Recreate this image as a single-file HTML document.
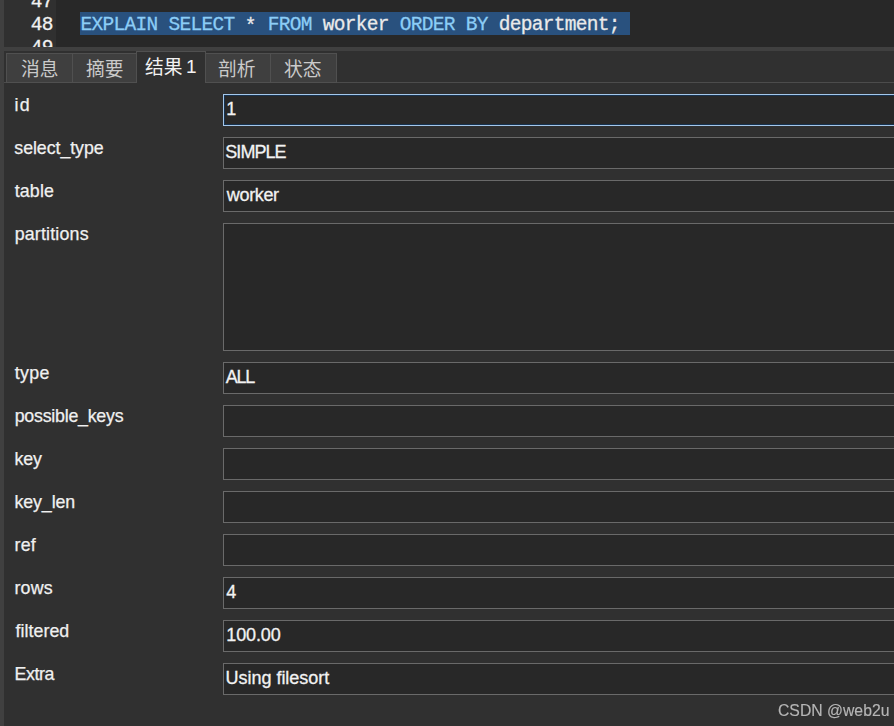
<!DOCTYPE html><html lang="zh"><head><meta charset="utf-8"><title>EXPLAIN result</title><style>
*{box-sizing:border-box;margin:0;padding:0}
html,body{width:894px;height:726px;overflow:hidden;background:#303030;font-family:"Liberation Sans",sans-serif}
body{position:relative;font-family:"Liberation Sans",sans-serif}
div,span,svg{position:absolute}
.strip{left:0;top:0;width:4px;height:726px;background:#404040}
.editor{left:4px;top:0;width:890px;height:47px;background:#282828;overflow:hidden}
.gutter{left:0;top:0;width:52px;height:47px;background:#303030}
.ln{left:0;width:48.8px;-webkit-text-stroke:0.28px #f2f2f2;height:23px;line-height:23px;text-align:right;font-family:"Liberation Mono",monospace;font-size:19.5px;letter-spacing:-0.7px;color:#f2f2f2;white-space:pre}
.sel{left:76px;top:12px;width:550px;height:23px;background:#29517e}
.code{-webkit-text-stroke:0.28px;left:76.6px;top:14px;height:23px;line-height:23px;font-family:"Liberation Mono",monospace;font-size:19.5px;letter-spacing:-0.7px;color:#eaeaea;white-space:pre}
.code span{position:static}
.k{color:#8ccdf6}
.code .as{position:relative;top:1.7px;left:-1px}
.band{left:4px;top:47px;width:890px;height:4px;background:#404040}
.hl{top:82px;height:1px;background:#4c4c4c}
.tab{top:53px;height:30px;background:#3f3f3f;border:1px solid #505050}
.tab.act{top:51px;height:32px;background:#303030;border-bottom:none}
.lab{-webkit-text-stroke:0.25px;left:15px;height:20px;line-height:20px;font-size:17.8px;color:#f0f0f0;white-space:pre}
.in{left:223px;width:700px;background:#282828;border:1px solid #6a6a6a}
.in.f{border-color:#a4c7ea;box-shadow:inset 0 0 0 1px #17324f}
.v{-webkit-text-stroke:0.3px;left:2px;top:-1px;height:30px;line-height:30px;font-size:18px;color:#f2f2f2;white-space:pre}
.one{left:186px;top:56px;height:22px;line-height:22px;font-size:19px;color:#f2f2f2;white-space:pre}
.wm{right:4.3px;top:701px;height:20px;line-height:20px;font-size:15.75px;color:#bcbcbc;white-space:pre;opacity:.96;will-change:transform;-webkit-text-stroke:.15px #bcbcbc}
.cj text{font-family:"Liberation Sans","Noto Sans CJK SC",sans-serif}
</style></head><body>
<div class="strip"></div>
<div class="editor"><div class="gutter"></div>
<div class="ln" style="top:-9px">47</div>
<div class="ln" style="top:14px">48</div>
<div class="ln" style="top:37px">49</div>
<div class="sel"></div>
<div class="code"><span class="k">EXPLAIN SELECT</span> <span class="as">*</span> <span class="k">FROM</span> worker <span class="k">ORDER BY</span> department;</div>
</div>
<div class="band"></div>
<div class="hl" style="left:4px;width:132px"></div>
<div class="hl" style="left:206px;width:688px"></div>
<div class="tab" style="left:6px;width:67px"></div>
<div class="tab" style="left:72px;width:65px"></div>
<div class="tab act" style="left:136px;width:70px"></div>
<div class="tab" style="left:205px;width:66px"></div>
<div class="tab" style="left:270px;width:67px"></div>
<svg class="cj" style="left:20.5px;top:58.9px" width="37.60" height="22.56" viewBox="0 0 2000 1200" fill="#cacaca"><text x="0" y="880" font-size="1000">消息</text></svg>
<svg class="cj" style="left:86.4px;top:58.9px" width="37.60" height="22.56" viewBox="0 0 2000 1200" fill="#cacaca"><text x="0" y="880" font-size="1000">摘要</text></svg>
<svg class="cj" style="left:144.70000000000002px;top:56.6px" width="37.60" height="22.56" viewBox="0 0 2000 1200" fill="#f2f2f2"><text x="0" y="880" font-size="1000">结果</text></svg>
<svg class="cj" style="left:218.4px;top:58.9px" width="37.60" height="22.56" viewBox="0 0 2000 1200" fill="#cacaca"><text x="0" y="880" font-size="1000">剖析</text></svg>
<svg class="cj" style="left:284.4px;top:58.9px" width="37.60" height="22.56" viewBox="0 0 2000 1200" fill="#cacaca"><text x="0" y="880" font-size="1000">状态</text></svg>
<div class="lab" style="top:95.0px;left:14.49px;letter-spacing:1.37px">id</div>
<div class="in f" style="top:94px;height:32px"><div class="v" style="left:2.36px">1</div></div>
<div class="lab" style="top:138.0px;left:14.32px;letter-spacing:-0.06px">select_type</div>
<div class="in" style="top:137px;height:32px"><div class="v" style="letter-spacing:-0.97px;left:1.32px">SIMPLE</div></div>
<div class="lab" style="top:181.0px;left:14.80px;letter-spacing:0.12px">table</div>
<div class="in" style="top:180px;height:32px"><div class="v" style="letter-spacing:-0.35px;left:2.87px">worker</div></div>
<div class="lab" style="top:224.0px;left:14.66px;letter-spacing:0.19px">partitions</div>
<div class="in" style="top:223px;height:128px"></div>
<div class="lab" style="top:363.0px;left:14.80px;letter-spacing:0.29px">type</div>
<div class="in" style="top:362px;height:32px"><div class="v" style="letter-spacing:-1.22px;left:1.68px">ALL</div></div>
<div class="lab" style="top:406.0px;left:14.66px;letter-spacing:-0.23px">possible_keys</div>
<div class="in" style="top:405px;height:32px"></div>
<div class="lab" style="top:449.0px;left:14.56px;letter-spacing:-0.17px">key</div>
<div class="in" style="top:448px;height:32px"></div>
<div class="lab" style="top:492.0px;left:14.56px;letter-spacing:-0.12px">key_len</div>
<div class="in" style="top:491px;height:32px"></div>
<div class="lab" style="top:535.0px;left:14.54px;letter-spacing:0.23px">ref</div>
<div class="in" style="top:534px;height:32px"></div>
<div class="lab" style="top:578.0px;left:14.54px;letter-spacing:0.16px">rows</div>
<div class="in" style="top:577px;height:32px"><div class="v" style="left:2.26px">4</div></div>
<div class="lab" style="top:621.0px;left:15.49px;letter-spacing:0.05px">filtered</div>
<div class="in" style="top:620px;height:32px"><div class="v" style="letter-spacing:-0.13px;left:2.36px">100.00</div></div>
<div class="lab" style="top:664.0px;left:14.61px;letter-spacing:-0.41px">Extra</div>
<div class="in" style="top:663px;height:32px"><div class="v" style="letter-spacing:-0.03px;left:1.59px">Using filesort</div></div>
<div class="one">1</div>
<div class="wm">CSDN @web2u</div>
</body></html>
